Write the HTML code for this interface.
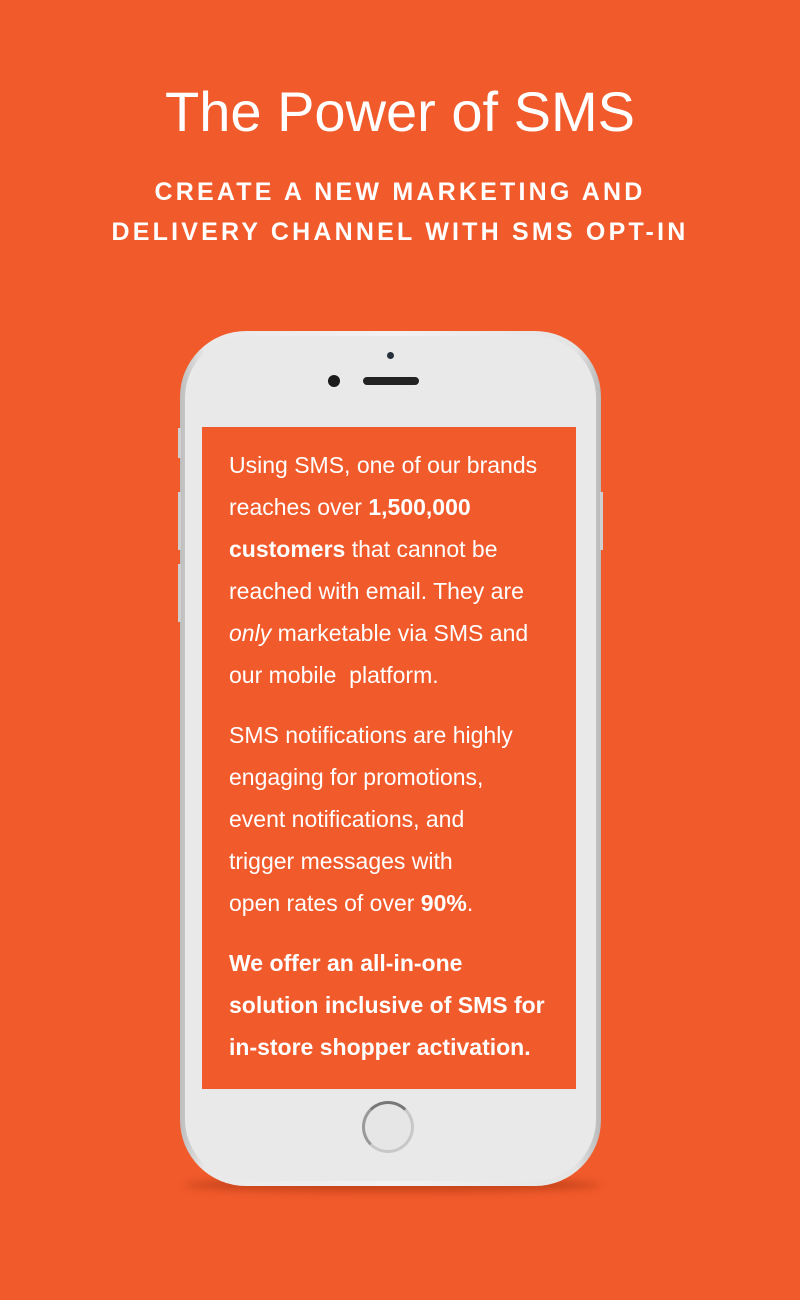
<!DOCTYPE html>
<html><head><style>
body{margin:0;width:800px;height:1300px;background:#f15a2b;font-family:"Liberation Sans",sans-serif;color:#fff;position:relative;overflow:hidden}
h1{position:absolute;top:78px;left:0;width:800px;text-align:center;margin:0;font-size:56px;font-weight:normal;line-height:68px}
.sub{position:absolute;top:172px;left:0;width:800px;text-align:center;font-size:25px;font-weight:bold;letter-spacing:3.2px;line-height:40px}
.shadow{position:absolute;left:185px;top:1178px;width:415px;height:14px;border-radius:50%;background:rgba(120,30,0,.35);filter:blur(4px)}
.phone{position:absolute;left:180px;top:331px;width:421px;height:855px;border-radius:66px;background:linear-gradient(90deg,#bdbdbd,#e9e9e9 6%,#f2f2f2 50%,#e4e4e4 94%,#b9b9b9)}
.face{position:absolute;left:5px;top:5px;right:5px;bottom:5px;border-radius:62px;background:#e9e9e9}
.screen{position:absolute;left:202px;top:427px;width:374px;height:662px;background:#f15a2b}
.cam{position:absolute;left:328px;top:375px;width:12px;height:12px;border-radius:50%;background:#1b1b1b}
.sens{position:absolute;left:387px;top:352px;width:7px;height:7px;border-radius:50%;background:#26303a}
.spk{position:absolute;left:363px;top:377px;width:56px;height:8px;border-radius:4px;background:#232323}
.home{position:absolute;left:362px;top:1101px;width:52px;height:52px;border-radius:50%;border:3px solid #c8c8c8;border-top-color:#777;border-left-color:#999;box-sizing:border-box;background:#e6e6e6}
.btn{position:absolute;background:#cfcfcf;width:3px}
.txt{position:absolute;left:229px;top:444px;width:360px;font-size:23px;line-height:42px;white-space:nowrap}
.txt p{margin:0 0 18px}
</style></head><body>
<h1>The Power of SMS</h1>
<div class="sub">CREATE A NEW MARKETING AND<br>DELIVERY CHANNEL WITH SMS OPT-IN</div>
<div class="shadow"></div>
<div class="phone"><div class="face"></div></div>
<div class="btn" style="left:178px;top:428px;height:30px"></div>
<div class="btn" style="left:178px;top:492px;height:58px"></div>
<div class="btn" style="left:178px;top:564px;height:58px"></div>
<div class="btn" style="left:600px;top:492px;height:58px"></div>
<div class="sens"></div><div class="cam"></div><div class="spk"></div>
<div class="screen"></div>
<div class="home"></div>
<div class="txt">
<p>Using SMS, one of our brands<br>reaches over <b>1,500,000</b><br><b>customers</b> that cannot be<br>reached with email. They are<br><i>only</i> marketable via SMS and<br>our mobile&nbsp; platform.</p>
<p>SMS notifications are highly<br>engaging for promotions,<br>event notifications, and<br>trigger messages with<br>open rates of over <b>90%</b>.</p>
<p><b>We offer an all-in-one<br>solution inclusive of SMS for<br>in-store shopper activation.</b></p>
</div>
</body></html>
